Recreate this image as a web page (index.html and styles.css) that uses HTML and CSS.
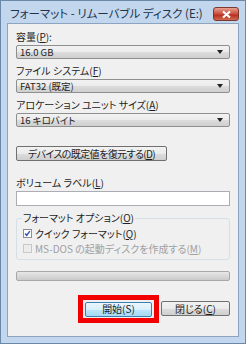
FILE: index.html
```html
<!DOCTYPE html>
<html lang="ja">
<head>
  <meta charset="UTF-8" />
  <title>フォーマット</title>
  <link rel="stylesheet" href="styles.css">
</head>
<body>
  <div class="window">
    <div class="titlebar">
      <span class="title">フォーマット - リムーバブル ディスク (E:)</span>
      <span class="close-btn">
        <svg width="11" height="9" viewBox="0 0 11 9"><path d="M2 1.5 L9 7.5 M9 1.5 L2 7.5" stroke="#fff" stroke-width="2.2"/></svg>
      </span>
    </div>
    <div class="client">
      <div class="field">
        <label>容量(<u>P</u>):</label>
        <div class="combo"><span>16.0 GB</span><span class="arrow"></span></div>
      </div>
      <div class="field">
        <label>ファイル システム(<u>F</u>)</label>
        <div class="combo"><span>FAT32 (既定)</span><span class="arrow"></span></div>
      </div>
      <div class="field">
        <label>アロケーション ユニット サイズ(<u>A</u>)</label>
        <div class="combo"><span>16 キロバイト</span><span class="arrow"></span></div>
      </div>
      <button class="btn restore">デバイスの既定値を復元する(<u>D</u>)</button>
      <div class="field volume">
        <label>ボリューム ラベル(<u>L</u>)</label>
        <div class="textbox"></div>
      </div>
      <fieldset class="options">
        <legend>フォーマット オプション(<u>O</u>)</legend>
        <div class="check">
          <span class="box checked">
            <svg width="9" height="9" viewBox="0 0 9 9"><path d="M1.5 4.5 L3.5 7 L7.5 1.5" stroke="#2a4fa8" stroke-width="1.8" fill="none"/></svg>
          </span>
          <span>クイック フォーマット(<u>Q</u>)</span>
        </div>
        <div class="check disabled">
          <span class="box"></span>
          <span>MS-DOS の起動ディスクを作成する(<u>M</u>)</span>
        </div>
      </fieldset>
      <div class="progress"></div>
      <div class="actions">
        <div class="highlight"><button class="btn primary">開始(S)</button></div>
        <button class="btn close">閉じる(<u>C</u>)</button>
      </div>
    </div>
  </div>
</body>
</html>
```

FILE: styles.css
```css
* {
  box-sizing: border-box;
}

body {
  margin: 0;
  font-family: "Noto Sans CJK JP", sans-serif;
  font-size: 10px;
  font-feature-settings: "palt";
  color: #1e1e1e;
  background: #fff;
}

.window {
  width: 246px;
  height: 344px;
  background: #c2d7ee;
  border: 1px solid #6c88a8;
  padding: 0 6px 6px 6px;
  display: flex;
  flex-direction: column;
}

.titlebar {
  height: 22px;
  display: flex;
  align-items: flex-start;
  justify-content: space-between;
}

.title {
  font-size: 11.5px;
  color: #22324a;
  padding-left: 3px;
  margin-top: 5px;
  line-height: 14px;
}

.close-btn {
  width: 26px;
  height: 14px;
  margin-top: 6px;
  background: linear-gradient(#e8a090, #c84c3c 50%, #b83020 60%, #d06a50);
  border: 1px solid #7a3a30;
  border-radius: 3px;
  display: flex;
  align-items: center;
  justify-content: center;
}

.client {
  flex: 1;
  background: #f0f0f0;
  border: 1px solid #8ca4c0;
  padding: 7px 8px 0 8px;
}

.field {
  margin-bottom: 6px;
}

.field label {
  display: block;
  line-height: 12px;
  margin-bottom: 2px;
}

.combo {
  height: 14px;
  border: 1px solid #8e8f8f;
  border-radius: 2px;
  background: linear-gradient(#f2f2f2, #ebebeb 50%, #dcdcdc 51%, #cfcfcf);
  display: flex;
  align-items: center;
  justify-content: space-between;
  padding: 0 6px 0 3px;
  font-size: 9.5px;
}

.arrow {
  width: 0;
  height: 0;
  border-left: 3.5px solid transparent;
  border-right: 3.5px solid transparent;
  border-top: 4px solid #222;
}

.btn {
  font-family: inherit;
  font-size: 10px;
  font-feature-settings: "palt";
  color: #1e1e1e;
  height: 15px;
  padding: 0;
  white-space: nowrap;
  border: 1px solid #707070;
  border-radius: 2px;
  background: linear-gradient(#f2f2f2, #ebebeb 50%, #dddddd 51%, #cfcfcf);
  line-height: 12px;
}

.restore {
  display: block;
  width: 151px;
  margin-top: 19px;
  margin-bottom: 16px;
  letter-spacing: -0.6px;
}

.volume .textbox {
  height: 15px;
  background: #fff;
  border: 1px solid #abadb3;
}

.options {
  margin: 0;
  padding: 3px 6px 4px 6px;
  border: 1px solid #d5dfe5;
  border-radius: 3px;
}

.options legend {
  padding: 0 1px;
  margin-left: -1px;
  line-height: 12px;
}

.check {
  display: flex;
  align-items: center;
  gap: 3px;
  line-height: 13px;
}

.check + .check {
  margin-top: 2px;
}

.box {
  width: 9px;
  height: 9px;
  border: 1px solid #8e8f8f;
  background: #f4f4f4;
  display: flex;
  align-items: center;
  justify-content: center;
}

.box.checked {
  background: #fff;
}

.disabled {
  color: #a0a0a0;
}

.disabled .box {
  border-color: #c8c8c8;
  background: #ececec;
}

.progress {
  margin-top: 11px;
  height: 10px;
  border: 1px solid #a8a8a8;
  border-radius: 2px;
  background: linear-gradient(#e8e8e8, #d8d8d8 50%, #cacaca);
}

.actions {
  display: flex;
  justify-content: flex-end;
  align-items: center;
  gap: 2px;
  margin-top: 14px;
}

.highlight {
  border: 5px solid #f20000;
  padding: 1px 2px;
}

.actions .btn {
  width: 67px;
}

.actions .close {
  width: 69px;
}

.primary {
  border-color: #3c7fb1;
  background: linear-gradient(#eaf6fd, #d9f0fc 50%, #bee6fd 51%, #a7d9f5);
}
```
